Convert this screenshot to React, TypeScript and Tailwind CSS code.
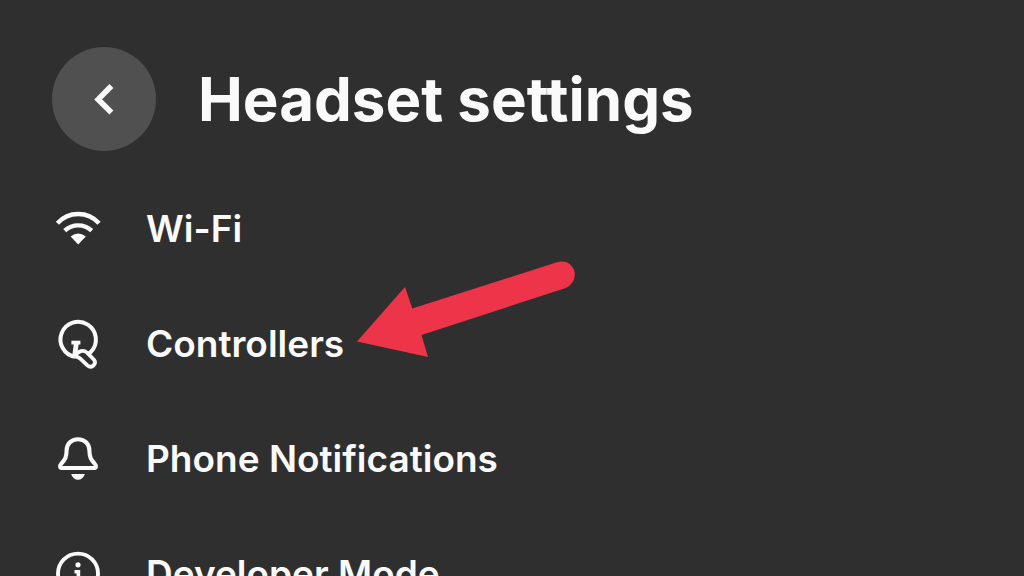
import React from 'react';

interface SettingsItem {
  id: string;
  label: string;
  icon: React.FC;
  highlighted?: boolean;
}

const iconClass = 'h-12 w-12 shrink-0 overflow-visible';

const WifiIcon: React.FC = () => (
  <svg viewBox="0 0 48 48" className={iconClass} fill="none" aria-hidden="true">
    <path d="M3.4 18.2A28 28 0 0 1 45 18.2" stroke="currentColor" strokeWidth="4.4" />
    <path d="M10.7 25.6A20 20 0 0 1 37.7 25.6" stroke="currentColor" strokeWidth="4.4" />
    <path d="M16.6 31.4Q24.2 25.4 31.8 31.4L24.2 39.5Z" fill="currentColor" />
  </svg>
);

const ControllerIcon: React.FC = () => (
  <svg viewBox="0 0 48 48" className={iconClass} fill="none" stroke="currentColor" aria-hidden="true">
    <path d="M21 36.9A17.7 17.7 0 1 1 36.9 31.8L34.6 34" strokeWidth="4" />
    <path d="M17.4 22.6H26.4" strokeWidth="3.8" />
    <path d="M22.4 23L20.6 36" strokeWidth="4.8" />
    <path
      d="M20.5 36C24.5 30.5 29.5 29.6 33 32.6L40 39.8C43.4 43.8 37.4 49 33.4 45.4L26.5 38.8C24.6 37.2 22.5 36.2 20.5 36.6"
      strokeWidth="3.8"
      strokeLinejoin="round"
    />
  </svg>
);

const BellIcon: React.FC = () => (
  <svg viewBox="0 0 48 48" className={iconClass} fill="none" aria-hidden="true">
    <path
      d="M24 4.2C17 4.2 12.6 9.2 12.6 15.6C12.6 22.4 11 24.6 7.4 28.6C5 31.2 6 33 8.4 33H39.6C42 33 43 31.2 40.6 28.6C37 24.6 35.4 22.4 35.4 15.6C35.4 9.2 31 4.2 24 4.2Z"
      stroke="currentColor"
      strokeWidth="4.1"
      strokeLinejoin="round"
    />
    <path d="M17.2 39H30.8C29.6 42.8 27.2 44.8 24 44.8S18.4 42.8 17.2 39Z" fill="currentColor" />
  </svg>
);

const InfoIcon: React.FC = () => (
  <svg viewBox="0 0 48 48" className={iconClass} fill="none" aria-hidden="true">
    <circle cx="24" cy="23.6" r="20" stroke="currentColor" strokeWidth="3.9" />
    <circle cx="24" cy="14.8" r="2.6" fill="currentColor" />
    <path d="M20.5 21.8H24.4V33.5" stroke="currentColor" strokeWidth="3.6" />
  </svg>
);

const Pointer: React.FC = () => (
  <svg
    viewBox="0 0 220 98"
    className="pointer-events-none absolute -top-[26px] left-[356px] w-[220px] text-[#ee3448]"
    fill="currentColor"
    aria-hidden="true"
  >
    <path d="M1 81.5L49 27L56.3 48.5L201 2.2C209 -0.2 215.5 3.6 218 10C220.5 17 217 25.4 209 28.3L65.5 75L72 97Z" />
  </svg>
);

const items: SettingsItem[] = [
  { id: 'wifi', label: 'Wi-Fi', icon: WifiIcon },
  { id: 'controllers', label: 'Controllers', icon: ControllerIcon, highlighted: true },
  { id: 'notifications', label: 'Phone Notifications', icon: BellIcon },
  { id: 'developer', label: 'Developer Mode', icon: InfoIcon }
];

const App: React.FC = () => {
  return (
    <main className="h-screen overflow-hidden bg-[#2f2f2f] font-['Inter',sans-serif] text-[#fafafa]">
      <header className="flex items-center gap-[42px] pt-[47px] pl-[52px]">
        <button
          type="button"
          aria-label="Back"
          className="flex h-26 w-26 shrink-0 items-center justify-center rounded-full bg-[#505050]"
        >
          <svg viewBox="0 0 32 32" className="h-8 w-8" fill="none" aria-hidden="true">
            <path d="M23.4 3L10.2 16.4L23.4 29.6" stroke="currentColor" strokeWidth="5.6" />
          </svg>
        </button>
        <h1 className="text-[60px] leading-none font-bold">Headset settings</h1>
      </header>

      <ul className="mt-5">
        {items.map(({ id, label, icon: Icon, highlighted }) => (
          <li key={id} className="relative">
            <button type="button" className="flex h-[115px] w-full items-center gap-11 pl-[54px] text-left">
              <Icon />
              <span className="text-[37px] leading-none font-semibold">{label}</span>
            </button>
            {highlighted && <Pointer />}
          </li>
        ))}
      </ul>
    </main>
  );
};

export default App;
